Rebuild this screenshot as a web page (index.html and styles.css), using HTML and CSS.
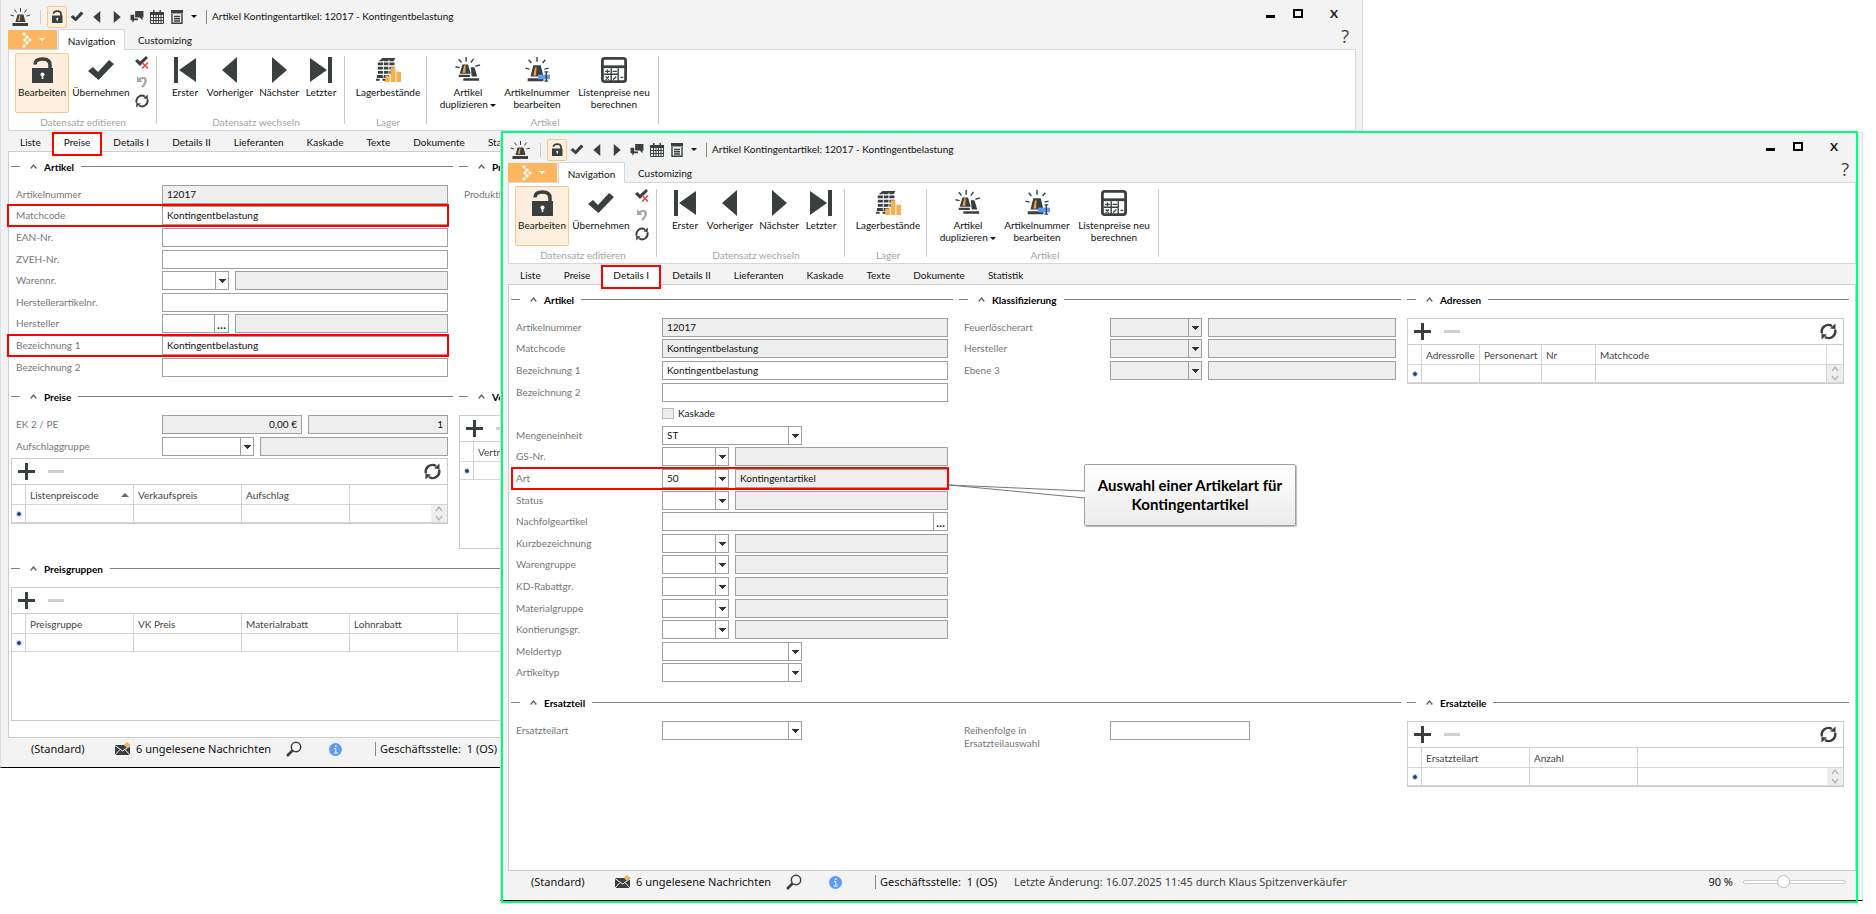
FILE: index.html
```html
<!DOCTYPE html>
<html lang="de">
<head>
    <meta charset="UTF-8">
    <meta name="viewport" content="width=device-width, initial-scale=1.0">
    <title>Artikel Kontingentartikel: 12017 - Kontingentbelastung</title>
    <link rel="stylesheet" href="styles.css">
</head>
<body>
    <!-- Icon sprite -->
    <svg class="sprite" aria-hidden="true">
        <symbol id="i-siren" viewBox="0 0 20 20"><path d="M5.500 15L7.500 7.500h6l2 7.500z" fill="#3a3f3f"/><path d="M8 14l1.300-5.500h1.200L9.800 14z" fill="#f6a23c"/><path d="M2.500 16h15.500v3H2.500z" fill="#3a3f3f"/><path d="M10.500 5V1M6.500 5.500l-2-3M14.500 5.500l2-3M4 9L.5 8M16.500 9l3.500-1" stroke="#3a3f3f" fill="none"/></symbol>
        <symbol id="i-lock" viewBox="0 0 24 26"><path d="M2 11h21v15H2z" fill="#3a3f3f"/><path d="M5 7.500C5 3 8 2 12.500 2S20 3.500 20 8v4" stroke="#3a3f3f" stroke-width="3.500" fill="none"/><circle cx="12.500" cy="17.500" r="2" fill="#fff"/><path d="M11.700 18h1.600v4h-1.600z" fill="#fff"/></symbol>
        <symbol id="i-check" viewBox="0 0 28 22"><path d="M1 12l5-4 5 5L22 1l5 4-15.500 16z" fill="#3a3f3f"/></symbol>
        <symbol id="i-left" viewBox="0 0 16 26"><path d="M15 0v26L0 13z" fill="#3a3f3f"/></symbol>
        <symbol id="i-right" viewBox="0 0 16 26"><path d="M1 0v26l15-13z" fill="#3a3f3f"/></symbol>
        <symbol id="i-first" viewBox="0 0 24 26"><path d="M1 0h4v26H1zM23 1v24L6 13z" fill="#3a3f3f"/></symbol>
        <symbol id="i-last" viewBox="0 0 24 26"><path d="M19 0h4v26h-4zM1 1v24l17-12z" fill="#3a3f3f"/></symbol>
        <symbol id="i-chat" viewBox="0 0 14 13"><path d="M5 0h9v7h-1v3l-3-3H5z" fill="#3a3f3f"/><path d="M0 4h4v4h4v2H4l-2 3v-3H0z" fill="#3a3f3f"/></symbol>
        <symbol id="i-cal" viewBox="0 0 14 14"><path d="M0 2h14v3H0zM3 0h1.500v3H3zM9.500 0H11v3H9.500z" fill="#3a3f3f"/><path d="M.5 4v9.500h13V4M3.500 5v8M6 5v8M8.500 5v8M11 5v8M1 7.500h12M1 10.500h12" stroke="#3a3f3f" fill="none"/></symbol>
        <symbol id="i-list" viewBox="0 0 12 14"><path d="M0 0h12v3.500H0z" fill="#3a3f3f"/><path d="M1 4v9.300h10V4M3 6.500h6M3 8.700h6M3 11h6" stroke="#3a3f3f" stroke-width="1.400" fill="none"/></symbol>
        <symbol id="i-logo" viewBox="0 0 12 16"><path d="M3 0l2 2-2 2-2-2zM6 3l2 2-2 2-2-2zM9 6l2 2-2 2-2-2zM4 6l2 2-2 2-2-2zM6 9l2 2-2 2-2-2zM3 12l2 2-2 2-2-2z" fill="#fff"/></symbol>
        <symbol id="i-cancel" viewBox="0 0 14 13"><path d="M0 5l2.500-2L5 5.500 11 0l2 2-8 8z" fill="#3a3f3f"/><path d="M7 6.500l6 6M13 6.500l-6 6" stroke="#ee4444" stroke-width="1.600"/></symbol>
        <symbol id="i-undo" viewBox="0 0 12 13"><path d="M3.500 4.500C7 1.500 10.500 3 9.500 7c-.5 2-1.500 3.500-3.500 5" stroke="#a8a8a8" stroke-width="2.400" fill="none"/><path d="M1 1v6h5.500z" fill="#a8a8a8"/></symbol>
        <symbol id="i-reload" viewBox="0 0 17 17"><path d="M2 10.500A6.700 6.700 0 0 1 12 3M15 6.500A6.700 6.700 0 0 1 5 14" stroke="#3a3f3f" stroke-width="2.400" fill="none"/><path d="M10 5.500L15.500 6V.5zM7 11.500L1.500 11v5.500z" fill="#3a3f3f"/></symbol>
        <symbol id="i-stock" viewBox="0 0 28 28"><path d="M4 4.500L8 1h14l-2 3.500zM3 6h18v3H3zM3 10.500h18v3H3zM3 15h14v3H3zM2 19.500h13v3H2zM1 23.500h4v2H1zM8 23.500h4v2H8z" fill="#3a3f3f"/><path d="M9 4v18M15 3v16" stroke="#fff"/><path d="M11 20h5v7h-5zM17 11h5v16h-5zM23 16h5v11h-5z" fill="#f6b04f"/></symbol>
        <symbol id="i-copy" viewBox="0 0 28 28"><path d="M5 18L8 8h6l3 10zM4 19h12v2.500H4z" fill="#3a3f3f"/><path d="M8 17l2-8h1.500L11 17z" fill="#f6a23c"/><path d="M17 11h4l3 10h-6zM9 23h17v2.500H9z" fill="#3a3f3f"/><path d="M12 5V0M7 6L4 2.500M17 6l3-4M5 11.500L.5 10.500M22 10l5-1.500" stroke="#3a3f3f" stroke-width="1.500"/></symbol>
        <symbol id="i-edit" viewBox="0 0 28 28"><path d="M7 21L10 9h8l3 12zM4 23h17v3H4z" fill="#3a3f3f"/><path d="M10 20l2-9h1.500L13 20z" fill="#f6a23c"/><path d="M15 19h13v5H15z" fill="#5d9cf5"/><path d="M22 16h4M24 16v10M22 26h4M14 5V0M8 6.500L5 3M20 6.500L23 3M6 13l-4.500-1M22 13l4.500-1" stroke="#3a3f3f" stroke-width="1.500"/></symbol>
        <symbol id="i-calc" viewBox="0 0 28 28"><rect x="1.500" y="1.500" width="25" height="25" rx="2.500" fill="#fff" stroke="#3a3f3f" stroke-width="3"/><path d="M2 9h24v3H2z" fill="#3a3f3f"/><path d="M11 12v14M18.500 12v14M3 18.500h15.500" stroke="#3a3f3f" stroke-width="1.500"/><path d="M4.500 15.500h5M7 13.500v4M12.500 15.500h4.500M5 21l3.500 3.500M8.500 21L5 24.500M13 24.500l3.500-3.500M21 22h3" stroke="#3a3f3f" stroke-width="1.300"/></symbol>
        <symbol id="i-mail" viewBox="0 0 16 14"><path d="M0 3h15v10H0z" fill="#3a3f3f"/><path d="M0 3.500l7.500 5.500L15 4M0 13l5-5.500M15 13l-5-5.500" stroke="#f3f3f3" fill="none"/><path d="M12 0l3.500 3L12 6 8.800 3z" fill="#f6b04f"/></symbol>
        <symbol id="i-search" viewBox="0 0 16 16"><circle cx="10" cy="6" r="4.700" stroke="#3a3f3f" stroke-width="1.500" fill="none"/><path d="M1 15l5.500-5.500" stroke="#3a3f3f" stroke-width="2.600"/></symbol>
        <symbol id="i-info" viewBox="0 0 13 13"><circle cx="6.500" cy="6.500" r="6.500" fill="#5d9cf5"/><path d="M6 2.500h1.500V4H6z" fill="#fff"/><path d="M5 5.500h1.800V9.500M4.800 10h4" stroke="#fff" fill="none"/></symbol>
        <symbol id="i-plus" viewBox="0 0 17 17"><path d="M7 0h3v7h7v3h-7v7H7v-7H0V7h7z" fill="#3a3f3f"/></symbol>
        <symbol id="i-minus" viewBox="0 0 17 17"><path d="M0 7h16v3H0z" fill="#cfcfcf"/></symbol>
        <symbol id="i-up" viewBox="0 0 7 5"><path d="M.7 4.500l2.800-3.500 2.800 3.500" stroke="#666" stroke-width="1.400" fill="none"/></symbol>
        <symbol id="i-spin" viewBox="0 0 8 16"><path d="M1 5.500l3-4 3 4M1 10.500l3 4 3-4" stroke="#b4b4b4" stroke-width="1.300" fill="none"/></symbol>
    </svg>

    <div class="desktop">
        <!-- Back window: Preise -->
        <div class="window window-back">
            <header class="titlebar">
                <svg class="app-icon"><use href="#i-siren"/></svg>
                <span class="divider"></span>
                <button class="quick quick-on" aria-label="Bearbeiten"><svg width="12" height="13"><use href="#i-lock"/></svg></button>
                <button class="quick" aria-label="Übernehmen"><svg width="14" height="11"><use href="#i-check"/></svg></button>
                <button class="quick" aria-label="Vorheriger"><svg width="8" height="12"><use href="#i-left"/></svg></button>
                <button class="quick" aria-label="Nächster"><svg width="8" height="12"><use href="#i-right"/></svg></button>
                <button class="quick" aria-label="Nachrichten"><svg width="14" height="12"><use href="#i-chat"/></svg></button>
                <button class="quick" aria-label="Kalender"><svg width="14" height="14"><use href="#i-cal"/></svg></button>
                <button class="quick" aria-label="Liste"><svg width="12" height="14"><use href="#i-list"/></svg></button>
                <button class="quick quick-more" aria-label="Mehr"><span class="caret"></span></button>
                <span class="divider divider-dark"></span>
                <h1 class="window-title">Artikel Kontingentartikel: 12017 - Kontingentbelastung</h1>
                <div class="window-buttons">
                    <button aria-label="Minimieren"><span class="win-min"></span></button>
                    <button aria-label="Maximieren"><span class="win-max"></span></button>
                    <button class="win-close">X</button>
                </div>
            </header>
            <nav class="ribbon-tabs">
                <button class="app-menu" aria-label="Menü"><svg width="12" height="16"><use href="#i-logo"/></svg><span class="caret"></span></button>
                <button class="ribbon-tab active">Navigation</button>
                <button class="ribbon-tab">Customizing</button>
                <button class="help">?</button>
            </nav>
            <div class="ribbon">
                <div class="group">
                    <div class="tools">
                        <button class="tool tool-on w-54"><svg width="24" height="26"><use href="#i-lock"/></svg>Bearbeiten</button>
                        <button class="tool w-64"><svg width="28" height="26"><use href="#i-check"/></svg>Übernehmen</button>
                        <div class="small-tools">
                            <button aria-label="Verwerfen"><svg width="14" height="13"><use href="#i-cancel"/></svg></button>
                            <button aria-label="Rückgängig"><svg width="12" height="13"><use href="#i-undo"/></svg></button>
                            <button aria-label="Aktualisieren"><svg width="14" height="14"><use href="#i-reload"/></svg></button>
                        </div>
                    </div>
                    <span class="group-name">Datensatz editieren</span>
                </div>
                <div class="group group-nav">
                    <div class="tools">
                        <button class="tool w-32"><svg width="24" height="26"><use href="#i-first"/></svg>Erster</button>
                        <button class="tool w-58"><svg width="16" height="26"><use href="#i-left"/></svg>Vorheriger</button>
                        <button class="tool w-40"><svg width="16" height="26"><use href="#i-right"/></svg>Nächster</button>
                        <button class="tool w-44"><svg width="24" height="26"><use href="#i-last"/></svg>Letzter</button>
                    </div>
                    <span class="group-name">Datensatz wechseln</span>
                </div>
                <div class="group group-stock">
                    <div class="tools">
                        <button class="tool w-70"><svg width="28" height="26"><use href="#i-stock"/></svg>Lagerbestände</button>
                    </div>
                    <span class="group-name">Lager</span>
                </div>
                <div class="group group-article">
                    <div class="tools">
                        <button class="tool w-70"><svg width="28" height="26"><use href="#i-copy"/></svg><span>Artikel<br>duplizieren <span class="caret"></span></span></button>
                        <button class="tool w-68"><svg width="28" height="26"><use href="#i-edit"/></svg>Artikelnummer bearbeiten</button>
                        <button class="tool w-86"><svg width="28" height="26"><use href="#i-calc"/></svg>Listenpreise neu berechnen</button>
                    </div>
                    <span class="group-name">Artikel</span>
                </div>
            </div>
            <nav class="tabs">
                <button class="tab">Liste</button>
                <button class="tab active">Preise</button>
                <button class="tab">Details I</button>
                <button class="tab">Details II</button>
                <button class="tab">Lieferanten</button>
                <button class="tab">Kaskade</button>
                <button class="tab">Texte</button>
                <button class="tab">Dokumente</button>
                <button class="tab">Sta</button>
            </nav>
            <main class="panel">
                <section>
                    <h2 class="section-head"><svg><use href="#i-up"/></svg>Artikel</h2>
                    <div class="rows">
                        <div class="row"><label for="a-nr">Artikelnummer</label><input id="a-nr" type="text" value="12017" readonly></div>
                        <div class="row marked marked-wide"><label for="a-match">Matchcode</label><input id="a-match" type="text" value="Kontingentbelastung"></div>
                        <div class="row"><label for="a-ean">EAN-Nr.</label><input id="a-ean" type="text"></div>
                        <div class="row"><label for="a-zveh">ZVEH-Nr.</label><input id="a-zveh" type="text"></div>
                        <div class="row"><label for="a-waren">Warennr.</label><span class="combo combo-s"><select id="a-waren"><option></option></select></span><input type="text" aria-label="Warennr. Text" readonly></div>
                        <div class="row"><label for="a-hnr">Herstellerartikelnr.</label><input id="a-hnr" type="text"></div>
                        <div class="row"><label for="a-her">Hersteller</label><span class="lookup combo-s"><input id="a-her" type="text"><button aria-label="Suchen">...</button></span><input type="text" aria-label="Hersteller Text" readonly></div>
                        <div class="row marked marked-wide"><label for="a-bez1">Bezeichnung 1</label><input id="a-bez1" type="text" value="Kontingentbelastung"></div>
                        <div class="row"><label for="a-bez2">Bezeichnung 2</label><input id="a-bez2" type="text"></div>
                    </div>
                </section>
                <section class="span-2">
                    <h2 class="section-head"><svg><use href="#i-up"/></svg>Pr</h2>
                    <div class="rows">
                        <div class="row"><span class="label">Produktl</span></div>
                    </div>
                </section>
                <section>
                    <h2 class="section-head"><svg><use href="#i-up"/></svg>Preise</h2>
                    <div class="rows">
                        <div class="row"><label for="a-ek">EK 2 / PE</label><input id="a-ek" class="num" type="text" value="0,00 €" readonly><input class="num" type="text" value="1" aria-label="PE" readonly></div>
                        <div class="row row-last"><label for="a-auf">Aufschlaggruppe</label><span class="combo combo-m"><select id="a-auf"><option></option></select></span><input type="text" aria-label="Aufschlaggruppe Text" readonly></div>
                    </div>
                    <div class="grid">
                        <div class="grid-bar">
                            <button aria-label="Neu"><svg><use href="#i-plus"/></svg></button>
                            <button aria-label="Löschen"><svg><use href="#i-minus"/></svg></button>
                            <button class="reload" aria-label="Aktualisieren"><svg><use href="#i-reload"/></svg></button>
                        </div>
                        <table>
                            <tr><th class="c-sel"></th><th class="c-108">Listenpreiscode <span class="sort"></span></th><th class="c-108">Verkaufspreis</th><th class="c-108">Aufschlag</th><th></th></tr>
                            <tr><td class="c-sel"><i class="dot"></i></td><td></td><td></td><td></td><td><span class="spin"><svg><use href="#i-spin"/></svg></span></td></tr>
                        </table>
                    </div>
                </section>
                <section class="span-2">
                    <h2 class="section-head"><svg><use href="#i-up"/></svg>Ve</h2>
                    <div class="grid grid-tall">
                        <div class="grid-bar">
                            <button aria-label="Neu"><svg><use href="#i-plus"/></svg></button>
                            <button aria-label="Löschen"><svg><use href="#i-minus"/></svg></button>
                        </div>
                        <table>
                            <tr><th class="c-sel"></th><th>Vertr</th></tr>
                            <tr><td class="c-sel"><i class="dot"></i></td><td></td></tr>
                        </table>
                    </div>
                </section>
                <section class="span-3">
                    <h2 class="section-head"><svg><use href="#i-up"/></svg>Preisgruppen</h2>
                    <div class="grid grid-tall">
                        <div class="grid-bar">
                            <button aria-label="Neu"><svg><use href="#i-plus"/></svg></button>
                            <button aria-label="Löschen"><svg><use href="#i-minus"/></svg></button>
                        </div>
                        <table>
                            <tr><th class="c-sel"></th><th class="c-108">Preisgruppe</th><th class="c-108">VK Preis</th><th class="c-108">Materialrabatt</th><th class="c-108">Lohnrabatt</th><th></th></tr>
                            <tr><td class="c-sel"><i class="dot"></i></td><td></td><td></td><td></td><td></td><td></td></tr>
                        </table>
                    </div>
                </section>
            </main>
            <footer class="statusbar">
                <span class="profile">(Standard)</span>
                <svg width="16" height="14"><use href="#i-mail"/></svg>
                <span class="messages">6 ungelesene Nachrichten</span>
                <svg class="search" width="16" height="16"><use href="#i-search"/></svg>
                <svg class="info" width="13" height="13"><use href="#i-info"/></svg>
                <span class="divider divider-dark"></span>
                <span class="branch">Geschäftsstelle:&nbsp; 1 (OS)</span>
            </footer>
        </div>

        <!-- Front window: Details I -->
        <div class="window window-front">
            <header class="titlebar">
                <svg class="app-icon"><use href="#i-siren"/></svg>
                <span class="divider"></span>
                <button class="quick quick-on" aria-label="Bearbeiten"><svg width="12" height="13"><use href="#i-lock"/></svg></button>
                <button class="quick" aria-label="Übernehmen"><svg width="14" height="11"><use href="#i-check"/></svg></button>
                <button class="quick" aria-label="Vorheriger"><svg width="8" height="12"><use href="#i-left"/></svg></button>
                <button class="quick" aria-label="Nächster"><svg width="8" height="12"><use href="#i-right"/></svg></button>
                <button class="quick" aria-label="Nachrichten"><svg width="14" height="12"><use href="#i-chat"/></svg></button>
                <button class="quick" aria-label="Kalender"><svg width="14" height="14"><use href="#i-cal"/></svg></button>
                <button class="quick" aria-label="Liste"><svg width="12" height="14"><use href="#i-list"/></svg></button>
                <button class="quick quick-more" aria-label="Mehr"><span class="caret"></span></button>
                <span class="divider divider-dark"></span>
                <h1 class="window-title">Artikel Kontingentartikel: 12017 - Kontingentbelastung</h1>
                <div class="window-buttons">
                    <button aria-label="Minimieren"><span class="win-min"></span></button>
                    <button aria-label="Maximieren"><span class="win-max"></span></button>
                    <button class="win-close">X</button>
                </div>
            </header>
            <nav class="ribbon-tabs">
                <button class="app-menu" aria-label="Menü"><svg width="12" height="16"><use href="#i-logo"/></svg><span class="caret"></span></button>
                <button class="ribbon-tab active">Navigation</button>
                <button class="ribbon-tab">Customizing</button>
                <button class="help">?</button>
            </nav>
            <div class="ribbon">
                <div class="group">
                    <div class="tools">
                        <button class="tool tool-on w-54"><svg width="24" height="26"><use href="#i-lock"/></svg>Bearbeiten</button>
                        <button class="tool w-64"><svg width="28" height="26"><use href="#i-check"/></svg>Übernehmen</button>
                        <div class="small-tools">
                            <button aria-label="Verwerfen"><svg width="14" height="13"><use href="#i-cancel"/></svg></button>
                            <button aria-label="Rückgängig"><svg width="12" height="13"><use href="#i-undo"/></svg></button>
                            <button aria-label="Aktualisieren"><svg width="14" height="14"><use href="#i-reload"/></svg></button>
                        </div>
                    </div>
                    <span class="group-name">Datensatz editieren</span>
                </div>
                <div class="group group-nav">
                    <div class="tools">
                        <button class="tool w-32"><svg width="24" height="26"><use href="#i-first"/></svg>Erster</button>
                        <button class="tool w-58"><svg width="16" height="26"><use href="#i-left"/></svg>Vorheriger</button>
                        <button class="tool w-40"><svg width="16" height="26"><use href="#i-right"/></svg>Nächster</button>
                        <button class="tool w-44"><svg width="24" height="26"><use href="#i-last"/></svg>Letzter</button>
                    </div>
                    <span class="group-name">Datensatz wechseln</span>
                </div>
                <div class="group group-stock">
                    <div class="tools">
                        <button class="tool w-70"><svg width="28" height="26"><use href="#i-stock"/></svg>Lagerbestände</button>
                    </div>
                    <span class="group-name">Lager</span>
                </div>
                <div class="group group-article">
                    <div class="tools">
                        <button class="tool w-70"><svg width="28" height="26"><use href="#i-copy"/></svg><span>Artikel<br>duplizieren <span class="caret"></span></span></button>
                        <button class="tool w-68"><svg width="28" height="26"><use href="#i-edit"/></svg>Artikelnummer bearbeiten</button>
                        <button class="tool w-86"><svg width="28" height="26"><use href="#i-calc"/></svg>Listenpreise neu berechnen</button>
                    </div>
                    <span class="group-name">Artikel</span>
                </div>
            </div>
            <nav class="tabs">
                <button class="tab">Liste</button>
                <button class="tab">Preise</button>
                <button class="tab active">Details I</button>
                <button class="tab">Details II</button>
                <button class="tab">Lieferanten</button>
                <button class="tab">Kaskade</button>
                <button class="tab">Texte</button>
                <button class="tab">Dokumente</button>
                <button class="tab">Statistik</button>
            </nav>
            <main class="panel">
                <section>
                    <h2 class="section-head"><svg><use href="#i-up"/></svg>Artikel</h2>
                    <div class="rows">
                        <div class="row"><label for="b-nr">Artikelnummer</label><input id="b-nr" type="text" value="12017" readonly></div>
                        <div class="row"><label for="b-match">Matchcode</label><input id="b-match" type="text" value="Kontingentbelastung" readonly></div>
                        <div class="row"><label for="b-bez1">Bezeichnung 1</label><input id="b-bez1" type="text" value="Kontingentbelastung"></div>
                        <div class="row"><label for="b-bez2">Bezeichnung 2</label><input id="b-bez2" type="text"></div>
                        <div class="row"><span class="label"></span><input id="b-kas" class="check" type="checkbox" disabled><label class="check-label" for="b-kas">Kaskade</label></div>
                        <div class="row"><label for="b-me">Mengeneinheit</label><span class="combo combo-l"><select id="b-me"><option>ST</option></select></span></div>
                        <div class="row"><label for="b-gs">GS-Nr.</label><span class="combo combo-s"><select id="b-gs"><option></option></select></span><input type="text" aria-label="GS-Nr. Text" readonly></div>
                        <div class="row marked"><label for="b-art">Art</label><span class="combo combo-s"><select id="b-art"><option>50</option></select></span><input type="text" value="Kontingentartikel" aria-label="Art Text" readonly></div>
                        <div class="row"><label for="b-sta">Status</label><span class="combo combo-s"><select id="b-sta"><option></option></select></span><input type="text" aria-label="Status Text" readonly></div>
                        <div class="row"><label for="b-nach">Nachfolgeartikel</label><span class="lookup"><input id="b-nach" type="text"><button aria-label="Suchen">...</button></span></div>
                        <div class="row"><label for="b-kurz">Kurzbezeichnung</label><span class="combo combo-s"><select id="b-kurz"><option></option></select></span><input type="text" aria-label="Kurzbezeichnung Text" readonly></div>
                        <div class="row"><label for="b-wgr">Warengruppe</label><span class="combo combo-s"><select id="b-wgr"><option></option></select></span><input type="text" aria-label="Warengruppe Text" readonly></div>
                        <div class="row"><label for="b-kd">KD-Rabattgr.</label><span class="combo combo-s"><select id="b-kd"><option></option></select></span><input type="text" aria-label="KD-Rabattgr. Text" readonly></div>
                        <div class="row"><label for="b-mat">Materialgruppe</label><span class="combo combo-s"><select id="b-mat"><option></option></select></span><input type="text" aria-label="Materialgruppe Text" readonly></div>
                        <div class="row"><label for="b-kon">Kontierungsgr.</label><span class="combo combo-s"><select id="b-kon"><option></option></select></span><input type="text" aria-label="Kontierungsgr. Text" readonly></div>
                        <div class="row"><label for="b-mel">Meldertyp</label><span class="combo combo-l"><select id="b-mel"><option></option></select></span></div>
                        <div class="row"><label for="b-typ">Artikeltyp</label><span class="combo combo-l"><select id="b-typ"><option></option></select></span></div>
                    </div>
                </section>
                <section>
                    <h2 class="section-head"><svg><use href="#i-up"/></svg>Klassifizierung</h2>
                    <div class="rows">
                        <div class="row"><label for="b-feu">Feuerlöscherart</label><span class="combo combo-m"><select id="b-feu" disabled><option></option></select></span><input type="text" aria-label="Feuerlöscherart Text" readonly></div>
                        <div class="row"><label for="b-her">Hersteller</label><span class="combo combo-m"><select id="b-her" disabled><option></option></select></span><input type="text" aria-label="Hersteller Text" readonly></div>
                        <div class="row"><label for="b-eb3">Ebene 3</label><span class="combo combo-m"><select id="b-eb3" disabled><option></option></select></span><input type="text" aria-label="Ebene 3 Text" readonly></div>
                    </div>
                </section>
                <section>
                    <h2 class="section-head"><svg><use href="#i-up"/></svg>Adressen</h2>
                    <div class="grid">
                        <div class="grid-bar">
                            <button aria-label="Neu"><svg><use href="#i-plus"/></svg></button>
                            <button aria-label="Löschen"><svg><use href="#i-minus"/></svg></button>
                            <button class="reload" aria-label="Aktualisieren"><svg><use href="#i-reload"/></svg></button>
                        </div>
                        <table>
                            <tr><th class="c-sel"></th><th class="c-58">Adressrolle</th><th class="c-62">Personenart</th><th class="c-54">Nr</th><th>Matchcode</th><th class="c-spin"></th></tr>
                            <tr><td class="c-sel"><i class="dot"></i></td><td></td><td></td><td></td><td></td><td><span class="spin"><svg><use href="#i-spin"/></svg></span></td></tr>
                        </table>
                    </div>
                </section>
                <section class="span-2">
                    <h2 class="section-head"><svg><use href="#i-up"/></svg>Ersatzteil</h2>
                    <div class="split">
                        <div class="row"><label for="b-ers">Ersatzteilart</label><span class="combo combo-l"><select id="b-ers"><option></option></select></span></div>
                        <div class="row"><label class="two-line" for="b-rei">Reihenfolge in Ersatzteilauswahl</label><input id="b-rei" class="combo-l" type="text"></div>
                    </div>
                </section>
                <section>
                    <h2 class="section-head"><svg><use href="#i-up"/></svg>Ersatzteile</h2>
                    <div class="grid">
                        <div class="grid-bar">
                            <button aria-label="Neu"><svg><use href="#i-plus"/></svg></button>
                            <button aria-label="Löschen"><svg><use href="#i-minus"/></svg></button>
                            <button class="reload" aria-label="Aktualisieren"><svg><use href="#i-reload"/></svg></button>
                        </div>
                        <table>
                            <tr><th class="c-sel"></th><th class="c-108">Ersatzteilart</th><th class="c-108">Anzahl</th><th></th></tr>
                            <tr><td class="c-sel"><i class="dot"></i></td><td></td><td></td><td><span class="spin"><svg><use href="#i-spin"/></svg></span></td></tr>
                        </table>
                    </div>
                </section>
            </main>
            <footer class="statusbar">
                <span class="profile">(Standard)</span>
                <svg width="16" height="14"><use href="#i-mail"/></svg>
                <span class="messages">6 ungelesene Nachrichten</span>
                <svg class="search" width="16" height="16"><use href="#i-search"/></svg>
                <svg class="info" width="13" height="13"><use href="#i-info"/></svg>
                <span class="divider divider-dark"></span>
                <span class="branch">Geschäftsstelle:&nbsp; 1 (OS)</span>
                <span class="changed">Letzte Änderung: 16.07.2025 11:45 durch Klaus Spitzenverkäufer</span>
                <label class="zoom-label" for="zoom">90 %</label>
                <input id="zoom" class="zoom" type="range" min="0" max="100" value="37">
            </footer>

            <!-- Annotation -->
            <svg class="pointer" width="136" height="16"><path d="M136 7L0 1l136 13" fill="#fff" stroke="#777"/></svg>
            <div class="callout">Auswahl einer Artikelart für Kontingentartikel</div>
            <div class="frame"></div>
        </div>
    </div>
</body>
</html>
```
FILE: styles.css
```css
* {
    margin: 0;
    padding: 0;
    box-sizing: border-box;
}

body {
    font-family: Lato, 'Open Sans', sans-serif;
    font-size: 10px;
    line-height: 12px;
    color: #111;
    background: #fff;
}

button,
input,
select {
    font: inherit;
    color: inherit;
    border: none;
    background: none;
    border-radius: 0;
    outline: none;
}

.sprite {
    position: absolute;
    width: 0;
    height: 0;
}

.desktop {
    position: relative;
    min-height: 100vh;
    overflow: hidden;
}

/* Windows */
.window {
    position: absolute;
    z-index: 0;
    display: flex;
    flex-direction: column;
    background: #f3f3f3;
    border: solid #e0e0e0;
    border-width: 0 1px;
    border-bottom: 1px solid #000;
    padding: 0 6px 0 7px;
}

.window-back {
    top: 0;
    left: 0;
    right: 513px;
    bottom: 146px;
}

.window-front {
    top: 132px;
    left: 500px;
    right: 13px;
    bottom: 13px;
    border-top: 1px solid #e0e0e0;
}

.frame {
    position: absolute;
    inset: -2px 4px -3px 0;
    border: 2px solid #00ff80;
    pointer-events: none;
}

/* Title bar */
.titlebar {
    display: flex;
    align-items: center;
    height: 29px;
    padding: 4px 18px 0 2px;
}

.app-icon {
    width: 20px;
    height: 20px;
    margin-right: 10px;
}

.divider {
    width: 1px;
    height: 14px;
    background: #ccc;
}

.divider-dark {
    background: #888;
}

.quick {
    display: flex;
    align-items: center;
    justify-content: center;
    width: 20px;
    height: 22px;
}

.quick-on {
    margin-left: 6px;
    border: 1px solid #f8c88c;
    border-radius: 2px;
    background: #fdeedd;
}

.quick-more {
    width: 14px;
    margin-right: 5px;
}

.caret {
    display: inline-block;
    vertical-align: middle;
    border: solid transparent;
    border-width: 3px 3px 0;
    border-top-color: currentColor;
}

.window-title {
    margin: 0 0 2px 5px;
    font-size: 10px;
    font-weight: 400;
}

.window-buttons {
    display: flex;
    margin-left: auto;
    height: 20px;
}

.window-buttons button {
    display: flex;
    align-items: flex-start;
    justify-content: center;
    width: 28px;
}

.window-buttons button:last-child {
    width: 26px;
    justify-content: flex-end;
}

.win-min {
    width: 9px;
    height: 3px;
    margin-top: 8px;
    background: #000;
}

.win-max {
    width: 10px;
    height: 9px;
    margin-top: 2px;
    border: 2px solid #000;
}

.win-close {
    font-size: 12px;
    line-height: 14px;
    font-weight: 700;
}

/* Ribbon tabs */
.ribbon-tabs {
    display: flex;
    align-items: stretch;
    height: 21px;
    margin-bottom: -1px;
    padding-right: 7px;
    position: relative;
}

.app-menu {
    display: flex;
    align-items: center;
    justify-content: center;
    gap: 6px;
    width: 49px;
    margin: 1px 1px 1px 0;
    background: #fcb660;
    color: #fff;
}

.ribbon-tab {
    width: 67px;
    padding-top: 1px;
}

.ribbon-tab.active {
    background: #fff;
    border: 1px solid #d6d6e0;
    border-bottom: none;
}

.ribbon-tab + .ribbon-tab {
    width: 80px;
}

.help {
    margin-left: auto;
    padding-bottom: 6px;
    font: 18px 'Open Sans', sans-serif;
    line-height: 15px;
    color: #444;
}

/* Ribbon */
.ribbon {
    display: flex;
    height: 82px;
    background: #fff;
    border: 1px solid #d6d6e0;
    padding-top: 3px;
}

.group {
    display: flex;
    flex-direction: column;
    align-items: center;
    padding: 0 6px;
    position: relative;
}

.group::after {
    content: "";
    position: absolute;
    top: 3px;
    bottom: 6px;
    right: 0;
    width: 1px;
    background: #c8c8d4;
}

.group-nav {
    padding: 0 2px 0 12px;
}

.group-stock {
    padding: 0 4px 0 8px;
}

.group-article {
    padding: 0 2px 0 6px;
}

.tools {
    display: flex;
    height: 60px;
}

.tool {
    display: flex;
    flex-direction: column;
    align-items: center;
    justify-content: flex-start;
    padding-top: 3px;
    border: 1px solid transparent;
    text-align: center;
}

.tool svg {
    flex: none;
    margin-bottom: 3px;
}

.tool-on {
    border-color: #f8c88c;
    border-radius: 2px;
    background: #fdeedd;
}

.w-32 { width: 32px; }
.w-40 { width: 40px; }
.w-44 { width: 44px; }
.w-54 { width: 54px; }
.w-58 { width: 58px; }
.w-64 { width: 64px; }
.w-68 { width: 68px; }
.w-70 { width: 70px; }
.w-86 { width: 86px; }

.tool.w-32,
.tool.w-40,
.tool.w-54,
.tool.w-58,
.tool.w-70 {
    white-space: nowrap;
}

.small-tools {
    display: flex;
    flex-direction: column;
    gap: 5px;
    width: 18px;
    padding-top: 3px;
}

.small-tools button {
    height: 14px;
}

.group-name {
    margin-top: 3px;
    color: #a5a5a5;
}

/* Page tabs */
.tabs {
    display: flex;
    height: 20px;
    padding-top: 1px;
    position: relative;
    z-index: 1;
}

.tab {
    height: 24px;
    margin: 0 -1px 0 0;
    padding: 0 10px 4px;
    border: 2px solid transparent;
    white-space: nowrap;
}

.tab.active {
    border-color: #f00;
    background: #fff;
}

/* Panel */
.panel {
    flex: 1;
    display: grid;
    grid-template-columns: repeat(3, minmax(0, 1fr));
    align-content: start;
    column-gap: 6px;
    row-gap: 14px;
    padding: 8px 6px 0 2px;
    background: #fff;
    border: 1px solid #ccc;
}

.window-back .panel {
    row-gap: 13px;
}

.span-2 {
    grid-column: span 2;
}

.span-3 {
    grid-column: span 3;
}

.section-head {
    display: flex;
    align-items: center;
    gap: 7px;
    height: 13px;
    margin-bottom: 12px;
    font-size: 10px;
    font-weight: 700;
    color: #000;
}

.section-head::before,
.section-head::after {
    content: "";
    height: 1px;
    background: #808080;
}

.section-head::before {
    width: 9px;
    margin-right: 3px;
}

.section-head::after {
    flex: 1;
}

.section-head svg {
    width: 7px;
    height: 5px;
}

/* Form rows */
.row {
    display: flex;
    gap: 6px;
    height: 19px;
    margin-top: 3px;
    padding: 0 5px;
    position: relative;
}

.row:nth-child(5n),
.row:nth-child(5n + 2) {
    margin-top: 2px;
}

.row:first-child,
.split .row {
    margin-top: 0;
}

.rows .row-last {
    margin-top: 3px;
}

.row > label,
.row > .label {
    flex: none;
    width: 140px;
    line-height: 19px;
    color: #777;
}

.row > .two-line {
    width: 100px;
    margin-right: 40px;
    padding-top: 3px;
    line-height: 13px;
}

.row input,
.row select {
    flex: 1;
    min-width: 0;
    width: 100%;
    height: 19px;
    padding: 0 4px 2px;
    border: 1px solid #a0a0a0;
    background: #fff;
}

.row input[readonly],
.row select:disabled {
    background: #eee;
}

.row .num {
    text-align: right;
}

.combo {
    display: grid;
    grid-template-columns: 1fr 14px;
    flex: none;
}

.combo select {
    grid-area: 1 / 1 / 2 / 3;
    appearance: none;
    opacity: 1;
}

.combo::after {
    content: "";
    grid-area: 1 / 2;
    z-index: 1;
    pointer-events: none;
    border-left: 1px solid #a0a0a0;
    background: conic-gradient(from -45deg at 50% 100%, #333 90deg, transparent 0) center / 7px 4px no-repeat;
}

.combo-s { width: 67px; }
.combo-m { width: 92px; }
.combo-l { width: 140px; }

.row input.combo-l {
    flex: none;
    width: 140px;
}

.lookup {
    display: flex;
    flex: 1;
}

.lookup.combo-s {
    flex: none;
}

.lookup button {
    width: 14px;
    border: 1px solid #a0a0a0;
    border-left: none;
    background: #fff;
    font-size: 13px;
    text-align: center;
}

.row .check {
    appearance: none;
    flex: none;
    width: 12px;
    height: 11px;
    margin-top: 4px;
    border-color: #bbb;
    background: #eee;
}

.row > .check-label {
    margin-left: -2px;
    color: #111;
}

.split {
    display: grid;
    grid-template-columns: 1fr 1fr;
    gap: 6px;
}

/* Red markers */
.marked::before {
    content: "";
    position: absolute;
    z-index: 2;
    inset: -2px 4px -2px 0;
    border: 2px solid #f00;
    pointer-events: none;
}

.marked-wide::before {
    left: -4px;
}

/* Data grids */
.grid {
    margin: 0 5px 0 0;
    border: 1px solid #ccc;
    border-top: none;
}

.rows + .grid {
    margin-top: 2px;
}

.grid-tall {
    height: 134px;
}

.grid-bar {
    display: flex;
    align-items: center;
    gap: 13px;
    height: 27px;
    padding: 0 6px;
    border: solid #ccc;
    border-width: 1px 0;
}

.grid-bar button,
.grid-bar svg {
    display: block;
    width: 17px;
    height: 17px;
}

.grid-bar .reload {
    margin-left: auto;
}

.grid table {
    width: 100%;
    table-layout: fixed;
    border-collapse: separate;
    border-spacing: 0;
}

.grid th,
.grid td {
    height: 20px;
    padding: 0 0 0 4px;
    border: solid #d6d6d6;
    border-width: 0 1px 1px 0;
    text-align: left;
    font-weight: 400;
    color: #444;
    white-space: nowrap;
}

.grid td {
    height: 18px;
    border-right-color: #c9d3de;
}

.grid th:last-child,
.grid td:last-child {
    padding: 0 0 0 4px;
    border-right: none;
}

.grid .c-sel {
    width: 14px;
    padding: 0;
    text-align: center;
}

.c-54 { width: 54px; }
.c-58 { width: 58px; }
.c-62 { width: 62px; }
.c-108 { width: 108px; }
.c-spin { width: 16px; }

.dot {
    display: block;
    width: 4px;
    height: 4px;
    margin: auto;
    border-radius: 2px;
    background: #1d3f77;
    outline: 1px dotted #9db4d6;
}

.sort {
    float: right;
    margin: 4px 4px 0 0;
    border: solid transparent;
    border-width: 0 4px 4px;
    border-bottom-color: #666;
}

.grid td:has(.spin) {
    padding: 0;
}

.spin {
    display: block;
    width: 16px;
    height: 17px;
    margin-left: auto;
    background: #eee;
}

.spin svg {
    display: block;
    width: 8px;
    height: 17px;
    margin: 0 auto;
}

/* Status bar */
.statusbar {
    display: flex;
    align-items: center;
    height: 29px;
    padding: 0 10px 7px 23px;
    font-family: 'Noto Sans', 'Open Sans', sans-serif;
    font-size: 11px;
    line-height: 16px;
    white-space: nowrap;
}

.profile {
    width: 84px;
}

.messages {
    width: 150px;
    margin-left: 5px;
}

.info {
    margin: 0 33px 0 27px;
}

.branch {
    width: 134px;
    margin-left: 4px;
}

.changed {
    color: #444;
}

.zoom-label {
    margin-left: auto;
}

.zoom {
    appearance: none;
    width: 103px;
    height: 14px;
    margin-left: 10px;
}

.zoom::-webkit-slider-runnable-track {
    height: 4px;
    border: 1px solid #ccc;
    border-radius: 2px;
    background: #fff;
}

.zoom::-webkit-slider-thumb {
    appearance: none;
    width: 13px;
    height: 13px;
    margin-top: -6px;
    border: 1px solid #bbb;
    border-radius: 50%;
    background: #fff;
}

/* Callout */
.callout {
    position: absolute;
    left: 583px;
    top: 331px;
    width: 212px;
    padding: 11px 8px;
    border: 1px solid #a0a0a0;
    border-radius: 2px;
    background: linear-gradient(#fff, #ececec);
    box-shadow: 1px 1px 1px #bbb;
    font-size: 15px;
    line-height: 19px;
    font-weight: 700;
    text-align: center;
    color: #000;
}

.pointer {
    position: absolute;
    z-index: 1;
    left: 448px;
    top: 351px;
}
```
